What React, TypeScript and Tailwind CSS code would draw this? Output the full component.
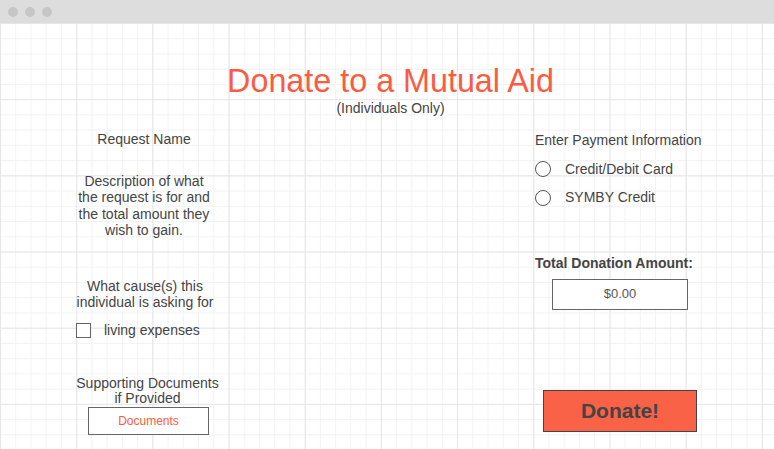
import React from 'react';

const gridBg =
  "bg-white bg-[linear-gradient(to_right,#e6e6e6_1px,transparent_1px),linear-gradient(to_bottom,#e6e6e6_1px,transparent_1px),linear-gradient(to_right,#f2f2f2_1px,transparent_1px),linear-gradient(to_bottom,#f2f2f2_1px,transparent_1px)] bg-[size:76.2px_76.2px,76.2px_76.2px,15.24px_15.24px,15.24px_15.24px]";

const Radio: React.FC<{ label: string }> = ({ label }) => (
  <div className="flex items-center h-4">
    <span className="w-[16px] h-[16px] rounded-full border border-[#555] bg-white" />
    <span className="ml-[14px]">{label}</span>
  </div>
);

const App: React.FC = () => {
  return (
    <div className="w-[774px] h-[449px] overflow-hidden flex flex-col font-['Liberation_Sans',Arial,sans-serif] text-[14px] text-[#444]">
      {/* window bar */}
      <div className="h-[23px] bg-[#dddddd] flex items-center pl-[8px] gap-[7px] shrink-0">
        <span className="w-[10px] h-[10px] rounded-full bg-[#c6c6c6]" />
        <span className="w-[10px] h-[10px] rounded-full bg-[#c6c6c6]" />
        <span className="w-[10px] h-[10px] rounded-full bg-[#c6c6c6]" />
      </div>

      <div className={`flex-1 ${gridBg} flex flex-col`}>
        <div className="pt-[40px] pl-[7px] flex flex-col items-center">
          <h1 className="text-[32.3px] leading-[36px] text-[#fa5c41]">Donate to a Mutual Aid</h1>
          <p className="leading-[16px] mt-[1px]">(Individuals Only)</p>
        </div>

        <div className="mt-[15px] flex">
          {/* request details */}
          <div className="ml-[71px] w-[150px] flex flex-col items-center text-center">
            <p className="leading-[16px] pr-[4px]">Request Name</p>
            <p className="mt-[26px] leading-[16.4px] pr-[4px]">
              Description of what
              <br />
              the request is for and
              <br />
              the total amount they
              <br />
              wish to gain.
            </p>
            <p className="mt-[39px] leading-[16.5px] pr-[2px]">
              What cause(s) this
              <br />
              individual is asking for
            </p>
            <label className="mt-[12px] self-start ml-[5px] flex items-center h-[15px]">
              <span className="w-[15px] h-[15px] border border-[#666] bg-white" />
              <span className="ml-[13px]">living expenses</span>
            </label>
            <p className="mt-[38px] leading-[15px] pl-[3px]">
              Supporting Documents
              <br />
              if Provided
            </p>
            <button className="mt-[1px] ml-[5px] w-[121px] h-[28px] border border-[#666] bg-white text-[12px] text-[#fa5c41]">
              Documents
            </button>
          </div>

          {/* payment */}
          <div className="ml-auto mr-[69px] w-[170px] pt-[1px] flex flex-col">
            <p className="leading-[16px]">Enter Payment Information</p>
            <div className="mt-[13px] flex flex-col gap-[12.5px]">
              <Radio label="Credit/Debit Card" />
              <Radio label="SYMBY Credit" />
            </div>
            <p className="mt-[49px] leading-[16px] font-bold">Total Donation Amount:</p>
            <div className="mt-[8px] self-center w-[136px] h-[31px] border border-[#666] bg-white flex items-center justify-center text-[13px] text-[#555]">
              $0.00
            </div>
            <button className="mt-[80px] self-center w-[154px] h-[42px] border-[1.5px] border-[#444] bg-[#fa6248] text-[21px] font-bold text-[#444]">
              Donate!
            </button>
          </div>
        </div>
      </div>
    </div>
  );
};

export default App;
